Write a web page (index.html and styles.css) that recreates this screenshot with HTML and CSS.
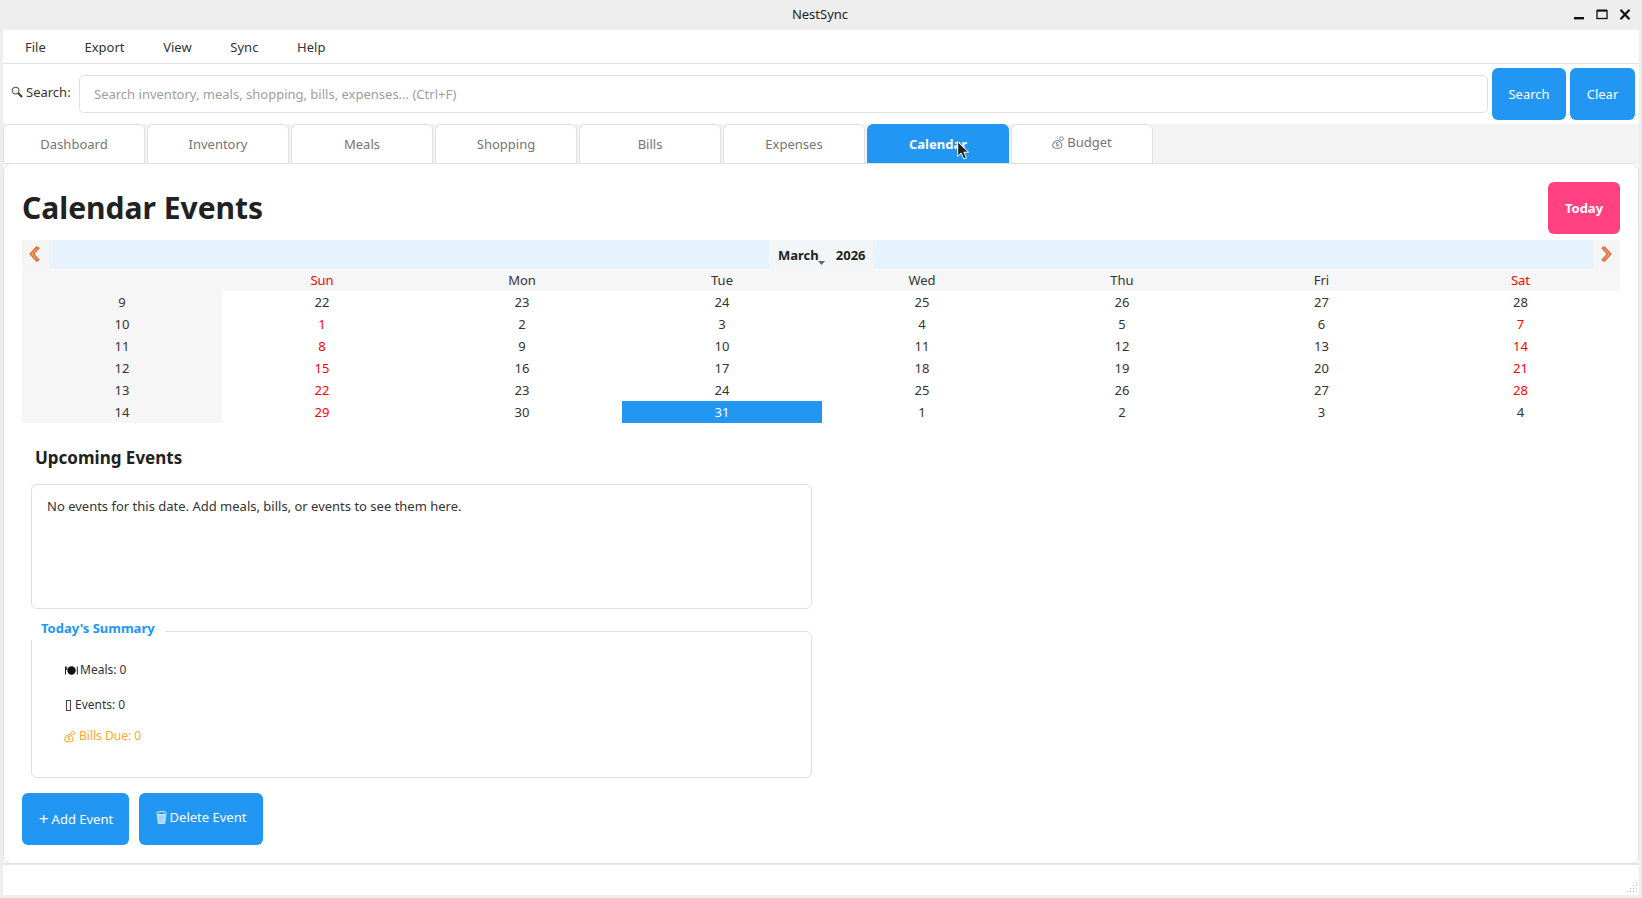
FILE: index.html
```html
<!DOCTYPE html>
<html lang="en">
<head>
<meta charset="utf-8">
<title>NestSync</title>
<link rel="stylesheet" href="styles.css">
</head>
<body>
<header class="titlebar">
  <span class="title">NestSync</span>
  <div class="winctl">
    <svg width="11" height="11" viewBox="0 0 11 11"><rect x="0" y="8" width="10" height="2.400" fill="#111"/></svg>
    <svg width="12" height="11" viewBox="0 0 12 11"><rect x="1" y="1.500" width="10" height="8" fill="none" stroke="#111" stroke-width="1.300"/><rect x="1" y="0.600" width="10" height="2" fill="#111"/></svg>
    <svg width="12" height="11" viewBox="0 0 12 11"><path d="M1.500 .8 10.500 10.200M10.500 .8 1.500 10.200" stroke="#111" stroke-width="2.200" fill="none"/></svg>
  </div>
</header>
<div class="app">
  <nav class="menubar">
    <span>File</span><span>Export</span><span>View</span><span>Sync</span><span>Help</span>
  </nav>
  <div class="searchbar">
    <label class="searchlabel">
      <svg class="glass" width="12" height="12" viewBox="0 0 12 12"><circle cx="4.600" cy="4.600" r="3.400" fill="#eef3f6" stroke="#555" stroke-width="1.100"/><path d="M7.200 7.200 11 11" stroke="#333" stroke-width="1.900"/></svg>
      Search:
    </label>
    <div class="searchinput">Search inventory, meals, shopping, bills, expenses... (Ctrl+F)</div>
    <button class="btn btn-search">Search</button>
    <button class="btn btn-clear">Clear</button>
  </div>
  <div class="tabs">
    <div class="tab">Dashboard</div>
    <div class="tab">Inventory</div>
    <div class="tab">Meals</div>
    <div class="tab">Shopping</div>
    <div class="tab">Bills</div>
    <div class="tab">Expenses</div>
    <div class="tab tab-active">Calendar</div>
    <div class="tab tab-icon">
      <svg width="13" height="13" viewBox="0 0 13 13"><path d="M5 4.200C2.500 5.500 .8 7.500 .8 9.400c0 2 1.800 2.900 4.400 2.900s4.600-.9 4.600-2.900c0-1.900-1.700-3.900-4-5.200Z" fill="none" stroke="#8a8a8a" stroke-width="1.100"/><circle cx="9.500" cy="2.700" r="1.900" fill="none" stroke="#8a8a8a"/><path d="M6.500 6.600H4.400v1.600h1.800v1.700H3.900" fill="none" stroke="#8a8a8a"/></svg>
      Budget
    </div>
  </div>
  <main class="pane">
    <div class="pane-head">
      <h1>Calendar Events</h1>
      <button class="btn btn-today">Today</button>
    </div>
    <section class="calendar">
      <div class="calnav">
        <div class="navbtn">
          <svg width="11" height="16" viewBox="0 0 11 16"><path d="M7.500 .6 .7 8l6.800 7.400 2.800-1.500L4.900 8l5.400-5.900Z" fill="#ee7b3e" stroke="#c9582a" stroke-width=".8"/><path d="M7 3 3 8l4 5" fill="none" stroke="#f8b48c" stroke-width=".8"/></svg>
        </div>
        <div class="monthyear">
          <span class="month">March<svg class="caret" width="7" height="4" viewBox="0 0 7 4"><path d="M0 0h7L3.500 4Z" fill="#666"/></svg></span>
          <span>2026</span>
        </div>
        <div class="navbtn navbtn-next">
          <svg width="11" height="16" viewBox="0 0 11 16"><path d="M3.500 .6 10.300 8l-6.800 7.400L.7 13.900 6.100 8 .7 2.100Z" fill="#ee7b3e" stroke="#c9582a" stroke-width=".8"/><path d="M4 3l4 5-4 5" fill="none" stroke="#f8b48c" stroke-width=".8"/></svg>
        </div>
      </div>
      <div class="calgrid">
        <div class="wk"></div><div class="dh red">Sun</div><div class="dh">Mon</div><div class="dh">Tue</div><div class="dh">Wed</div><div class="dh">Thu</div><div class="dh">Fri</div><div class="dh red">Sat</div>
        <div class="wk">9</div><div>22</div><div>23</div><div>24</div><div>25</div><div>26</div><div>27</div><div>28</div>
        <div class="wk">10</div><div class="red">1</div><div>2</div><div>3</div><div>4</div><div>5</div><div>6</div><div class="red">7</div>
        <div class="wk">11</div><div class="red">8</div><div>9</div><div>10</div><div>11</div><div>12</div><div>13</div><div class="red">14</div>
        <div class="wk">12</div><div class="red">15</div><div>16</div><div>17</div><div>18</div><div>19</div><div>20</div><div class="red">21</div>
        <div class="wk">13</div><div class="red">22</div><div>23</div><div>24</div><div>25</div><div>26</div><div>27</div><div class="red">28</div>
        <div class="wk">14</div><div class="red">29</div><div>30</div><div class="sel">31</div><div>1</div><div>2</div><div>3</div><div>4</div>
      </div>
    </section>
    <section class="lower">
      <h2>Upcoming Events</h2>
      <div class="eventsbox">No events for this date. Add meals, bills, or events to see them here.</div>
      <div class="summary">
        <div class="legend">Today's Summary</div>
        <div class="sumrow sum-meals">
          <svg width="13" height="9" viewBox="0 0 13 9"><circle cx="6.500" cy="4.500" r="4.200" fill="#111"/><path d="M.5 .5v8M1.700 .5v3.500M12.300 .5v8" stroke="#222" stroke-width="1" fill="none"/></svg>
          <span>Meals: 0</span>
        </div>
        <div class="sumrow sum-events">
          <span class="tofu"></span>
          <span>Events: 0</span>
        </div>
        <div class="sumrow sum-bills">
          <svg width="12" height="13" viewBox="0 0 13 13"><path d="M5 4.200C2.500 5.500 .8 7.500 .8 9.400c0 2 1.800 2.900 4.400 2.900s4.600-.9 4.600-2.900c0-1.900-1.700-3.900-4-5.200Z" fill="none" stroke="#ffa726" stroke-width="1.100"/><circle cx="9.500" cy="2.700" r="1.900" fill="none" stroke="#ffa726"/><path d="M6.500 6.600H4.400v1.600h1.800v1.700H3.900" fill="none" stroke="#ffa726"/></svg>
          <span>Bills Due: 0</span>
        </div>
      </div>
    </section>
    <div class="actions">
      <button class="btn btn-add"><span class="plus">+</span> Add Event</button>
      <button class="btn btn-del">
        <svg width="11" height="13" viewBox="0 0 11 13"><path d="M1.200 3.200 2.300 12.500h6.400l1.100-9.300Z" fill="#a9d5f9" stroke="#e6f3fe" stroke-width=".8"/><ellipse cx="5.500" cy="2.200" rx="5" ry="1.600" fill="#2196f3" stroke="#eef7ff" stroke-width="1"/></svg>
        Delete Event
      </button>
    </div>
  </main>
  <footer class="statusbar">
    <svg class="grip" width="11" height="11" viewBox="0 0 11 11" aria-hidden="true"><g fill="#c4c4c4"><rect x="9" y="0" width="1" height="1"/><rect x="6" y="3" width="1" height="1"/><rect x="9" y="3" width="1" height="1"/><rect x="3" y="6" width="1" height="1"/><rect x="6" y="6" width="1" height="1"/><rect x="9" y="6" width="1" height="1"/><rect x="0" y="9" width="1" height="1"/><rect x="3" y="9" width="1" height="1"/><rect x="6" y="9" width="1" height="1"/><rect x="9" y="9" width="1" height="1"/></g></svg>
  </footer>
</div>
<svg class="cursor" width="13" height="19" viewBox="0 0 13 19"><path d="M.7.7v14.600l3.500-3.200 2.500 5.900 2.700-1.200-2.500-5.600h4.700Z" fill="#222" stroke="#fff" stroke-width="1"/></svg>
</body>
</html>
```
FILE: styles.css
```css
* { box-sizing: border-box; }
html, body { margin: 0; height: 100%; }
body {
  height: 898px;
  overflow: hidden;
  background: #eeeeee;
  font: 13px/18px "Noto Sans", sans-serif;
  color: #333;
  display: flex;
  flex-direction: column;
  position: relative;
}
.titlebar {
  height: 30px;
  flex: none;
  display: flex;
  align-items: center;
  justify-content: center;
  position: relative;
  color: #222;
}
.title { position: relative; top: -1px; left: -1px; }
.winctl {
  position: absolute;
  right: 11px;
  top: 9px;
  display: flex;
  gap: 11px;
}
.app {
  flex: 1;
  margin: 0 3px 3px;
  display: flex;
  flex-direction: column;
  background: #fff;
  min-height: 0;
}
.menubar {
  height: 34px;
  flex: none;
  display: flex;
  align-items: center;
  gap: 38.7px;
  padding: 0 0 0 22px;
  border-bottom: 1px solid #e0e0e0;
}
.searchbar {
  height: 60px;
  flex: none;
  display: flex;
  align-items: center;
  padding-left: 8px;
  padding-right: 4px;
}
.searchlabel {
  display: flex;
  align-items: center;
  gap: 3px;
  width: 68px;
  flex: none;
  position: relative;
  top: -2px;
}
.searchinput {
  flex: 1;
  height: 38px;
  border: 1px solid #e0e0e0;
  border-radius: 5px;
  padding: 0 14px;
  line-height: 36px;
  color: #9e9e9e;
}
.btn {
  border: 0;
  border-radius: 6px;
  background: #2196f3;
  color: #fff;
  font: 13px/18px "Noto Sans", sans-serif;
  height: 52px;
  padding: 0;
  flex: none;
  display: flex;
  align-items: center;
  justify-content: center;
  gap: 3px;
}
.btn-search { width: 74px; margin-left: 4px; }
.btn-clear { width: 65px; margin-left: 4px; }
.tabs {
  height: 40px;
  flex: none;
  background: #f3f3f3;
  display: flex;
  gap: 2px;
  position: relative;
  z-index: 1;
  margin-bottom: -1px;
}
.tab {
  width: 142px;
  height: 40px;
  border: 1px solid #e0e0e0;
  border-radius: 6px 6px 0 0;
  background: #fff;
  color: #757575;
  display: flex;
  align-items: center;
  justify-content: center;
  gap: 2px;
}
.tab-icon { padding-bottom: 4px; }
.tab-active {
  background: #2196f3;
  border-color: #2196f3;
  color: #fff;
  font-weight: 700;
}
.pane {
  flex: 1;
  min-height: 0;
  border: 1px solid #e0e0e0;
  border-radius: 8px;
  padding: 18px;
  background: #fff;
  position: relative;
  z-index: 2;
}
.pane-head {
  display: flex;
  justify-content: space-between;
  align-items: center;
  height: 52px;
}
h1 {
  margin: 0;
  font-size: 30px;
  line-height: 40px;
  font-weight: 700;
  color: #212121;
}
.btn-today {
  width: 72px;
  background: #ff4081;
  font-weight: 700;
}
.calendar { margin-top: 6px; }
.calnav {
  height: 29px;
  background: #e6f3fd;
  display: flex;
  justify-content: space-between;
  align-items: stretch;
}
.navbtn {
  width: 27px;
  background: #f5f5f5;
  display: flex;
  align-items: center;
  justify-content: center;
  padding: 0 2px 2px 0;
}
.navbtn-next { padding: 0 1px 2px 0; }
.monthyear {
  width: 104px;
  background: #f3f6f9;
  display: flex;
  align-items: center;
  gap: 17px;
  padding-left: 9px;
  font-weight: 700;
  color: #222;
}
.month { position: relative; }
.caret { position: absolute; left: 40px; top: 15px; }
.calgrid {
  display: grid;
  grid-template-columns: repeat(6, 200px) 199px 1fr;
  grid-auto-rows: 22px;
  text-align: center;
  line-height: 22px;
}
.wk, .dh { background: #f6f6f6; }
.red { color: #ff0000; }
.sel { background: #2196f3; color: #fff; }
.lower { width: 790px; padding-left: 9px; }
h2 {
  margin: 23px 0 14px 4px;
  font-size: 17px;
  line-height: 24px;
  font-weight: 700;
  color: #212121;
}
.eventsbox {
  height: 125px;
  border: 1px solid #e0e0e0;
  border-radius: 6px;
  padding: 12px 15px;
  color: #333;
}
.summary {
  height: 147px;
  margin-top: 22px;
  border: 1px solid #e0e0e0;
  border-radius: 6px;
  padding: 29px 0 0 33px;
  position: relative;
}
.legend {
  position: absolute;
  left: -1px;
  top: -14px;
  padding: 0 10px;
  height: 22px;
  line-height: 20px;
  background: #fff;
  color: #2196f3;
  font-weight: 700;
}
.sumrow {
  display: flex;
  align-items: center;
  gap: 2px;
  height: 18px;
  font-size: 12px;
  color: #333;
}
.sum-events { margin-top: 17px; gap: 4px; margin-left: 1px; }
.sum-bills { margin-top: 13px; color: #ffa726; gap: 3px; margin-left: -1px; }
.tofu {
  width: 5px;
  height: 11px;
  border: 1px solid #444;
  display: inline-block;
}
.actions {
  display: flex;
  gap: 10px;
  margin-top: 15px;
}
.btn-add { width: 107px; padding-left: 1px; }
.plus { font-size: 17px; line-height: 18px; }
.btn-del { width: 124px; padding-bottom: 4px; }
.statusbar {
  height: 32px;
  flex: none;
  border-top: 2px solid #e4e4e4;
  position: relative;
  margin-top: -1px;
}
.grip { position: absolute; right: 1px; bottom: 2px; }
.cursor { position: absolute; left: 957px; top: 141px; z-index: 5; }
```
